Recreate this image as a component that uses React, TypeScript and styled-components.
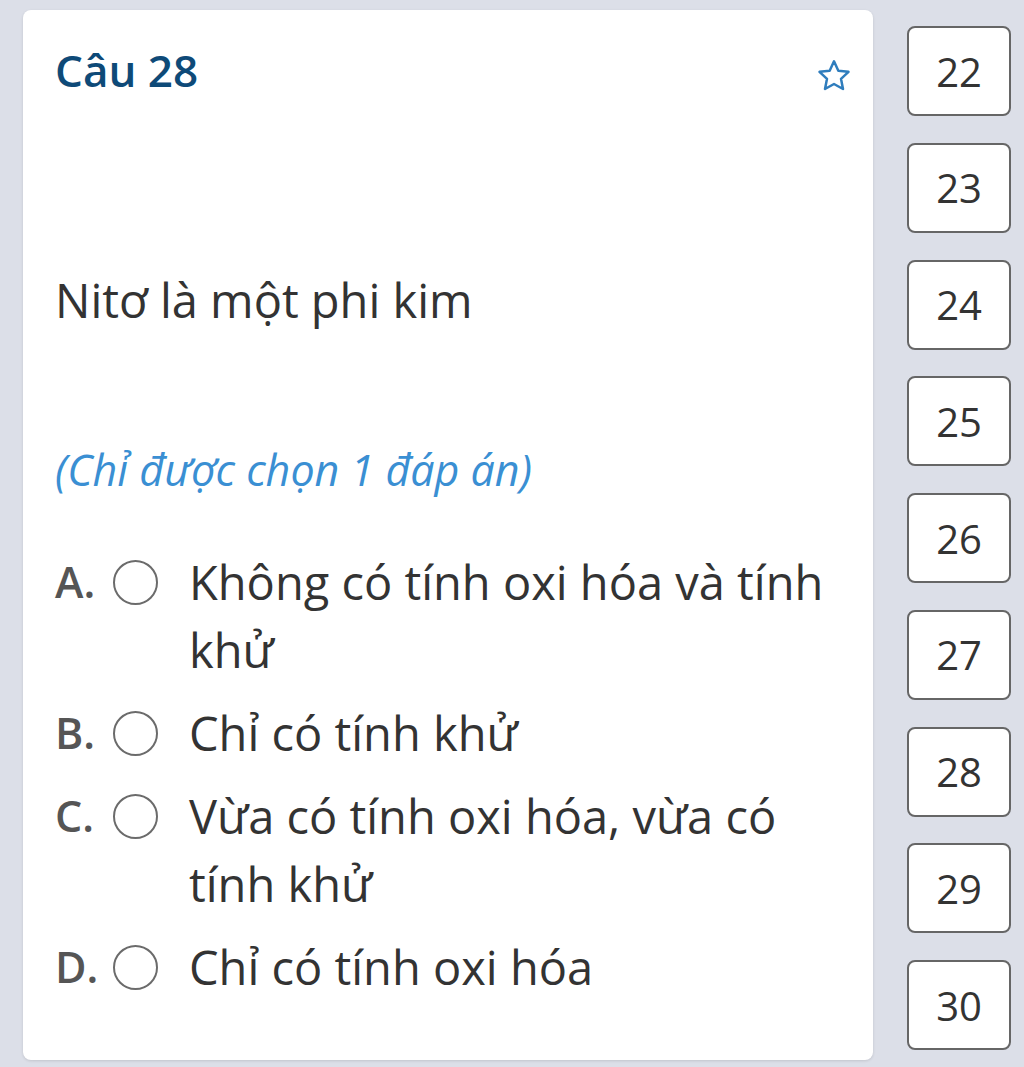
import styled, { createGlobalStyle } from 'styled-components';

const GlobalStyle = createGlobalStyle`
  html, body {
    margin: 0;
    padding: 0;
    background: #dcdfe8;
    font-family: 'Open Sans', 'Liberation Sans', sans-serif;
  }
`;

const options = [
  { key: 'A', text: 'Không có tính oxi hóa và tính khử' },
  { key: 'B', text: 'Chỉ có tính khử' },
  { key: 'C', text: 'Vừa có tính oxi hóa, vừa có tính khử' },
  { key: 'D', text: 'Chỉ có tính oxi hóa' },
];

const numbers = [22, 23, 24, 25, 26, 27, 28, 29, 30];

function StarIcon() {
  return (
    <svg width="40" height="40" viewBox="0 0 24 24" fill="none">
      <path
        d="M12 3.2l2.6 5.6 6.1.7-4.5 4.2 1.2 6.1L12 16.8l-5.4 3 1.2-6.1-4.5-4.2 6.1-.7z"
        stroke="#2f7dbd"
        strokeWidth="1.5"
        strokeLinejoin="round"
      />
    </svg>
  );
}

export default function App() {
  return (
    <>
      <GlobalStyle />
      <Page>
        <Card>
          <TitleRow>
            <Title>Câu 28</Title>
            <StarButton>
              <StarIcon />
            </StarButton>
          </TitleRow>
          <Question>Nitơ là một phi kim</Question>
          <Hint>(Chỉ được chọn 1 đáp án)</Hint>
          <OptionList>
            {options.map((o) => (
              <Option key={o.key}>
                <Label>{o.key}.</Label>
                <Radio />
                <OptionText>{o.text}</OptionText>
              </Option>
            ))}
          </OptionList>
        </Card>
        <NavColumn>
          {numbers.map((n) => (
            <NumBox key={n}>{n}</NumBox>
          ))}
        </NavColumn>
      </Page>
    </>
  );
}

const Page = styled.div`
  display: flex;
  align-items: flex-start;
  gap: 34px;
  padding: 10px 13px 0 23px;
  height: 1067px;
  box-sizing: border-box;
  overflow: hidden;
`;

const Card = styled.div`
  width: 850px;
  height: 1050px;
  flex-shrink: 0;
  box-sizing: border-box;
  background: #ffffff;
  border-radius: 8px;
  box-shadow: 0 1px 3px rgba(0, 0, 0, 0.12);
  padding: 30px 19px 0 32px;
  display: flex;
  flex-direction: column;
`;

const TitleRow = styled.div`
  display: flex;
  align-items: center;
  justify-content: space-between;
  height: 60px;
`;

const Title = styled.div`
  font-size: 44px;
  font-weight: 600;
  color: #0e4a78;
  line-height: 60px;
`;

const StarButton = styled.div`
  display: flex;
  align-items: center;
  margin-top: 12px;
`;

const Question = styled.div`
  margin-top: 170px;
  font-size: 47px;
  line-height: 60px;
  color: #333333;
`;

const Hint = styled.div`
  margin-top: 110px;
  font-size: 43px;
  font-style: italic;
  line-height: 60px;
  color: #3a8fd3;
`;

const OptionList = styled.div`
  margin-top: 48px;
  display: flex;
  flex-direction: column;
  gap: 15px;
`;

const Option = styled.div`
  display: flex;
  align-items: flex-start;
`;

const Label = styled.div`
  width: 44px;
  font-size: 43px;
  font-weight: 600;
  color: #555555;
  line-height: 68px;
`;

const Radio = styled.div`
  width: 41px;
  height: 41px;
  margin: 12px 0 0 14px;
  flex-shrink: 0;
  border: 2px solid #6b6b6b;
  border-radius: 50%;
`;

const OptionText = styled.div`
  margin-left: 31px;
  max-width: 650px;
  font-size: 47px;
  line-height: 68px;
  color: #333333;
`;

const NavColumn = styled.div`
  margin-top: 16px;
  display: flex;
  flex-direction: column;
  gap: 26.75px;
`;

const NumBox = styled.div`
  width: 104px;
  height: 90px;
  box-sizing: border-box;
  border: 2px solid #666666;
  border-radius: 8px;
  background: #ffffff;
  display: flex;
  align-items: center;
  justify-content: center;
  font-size: 40px;
  color: #333333;
`;
